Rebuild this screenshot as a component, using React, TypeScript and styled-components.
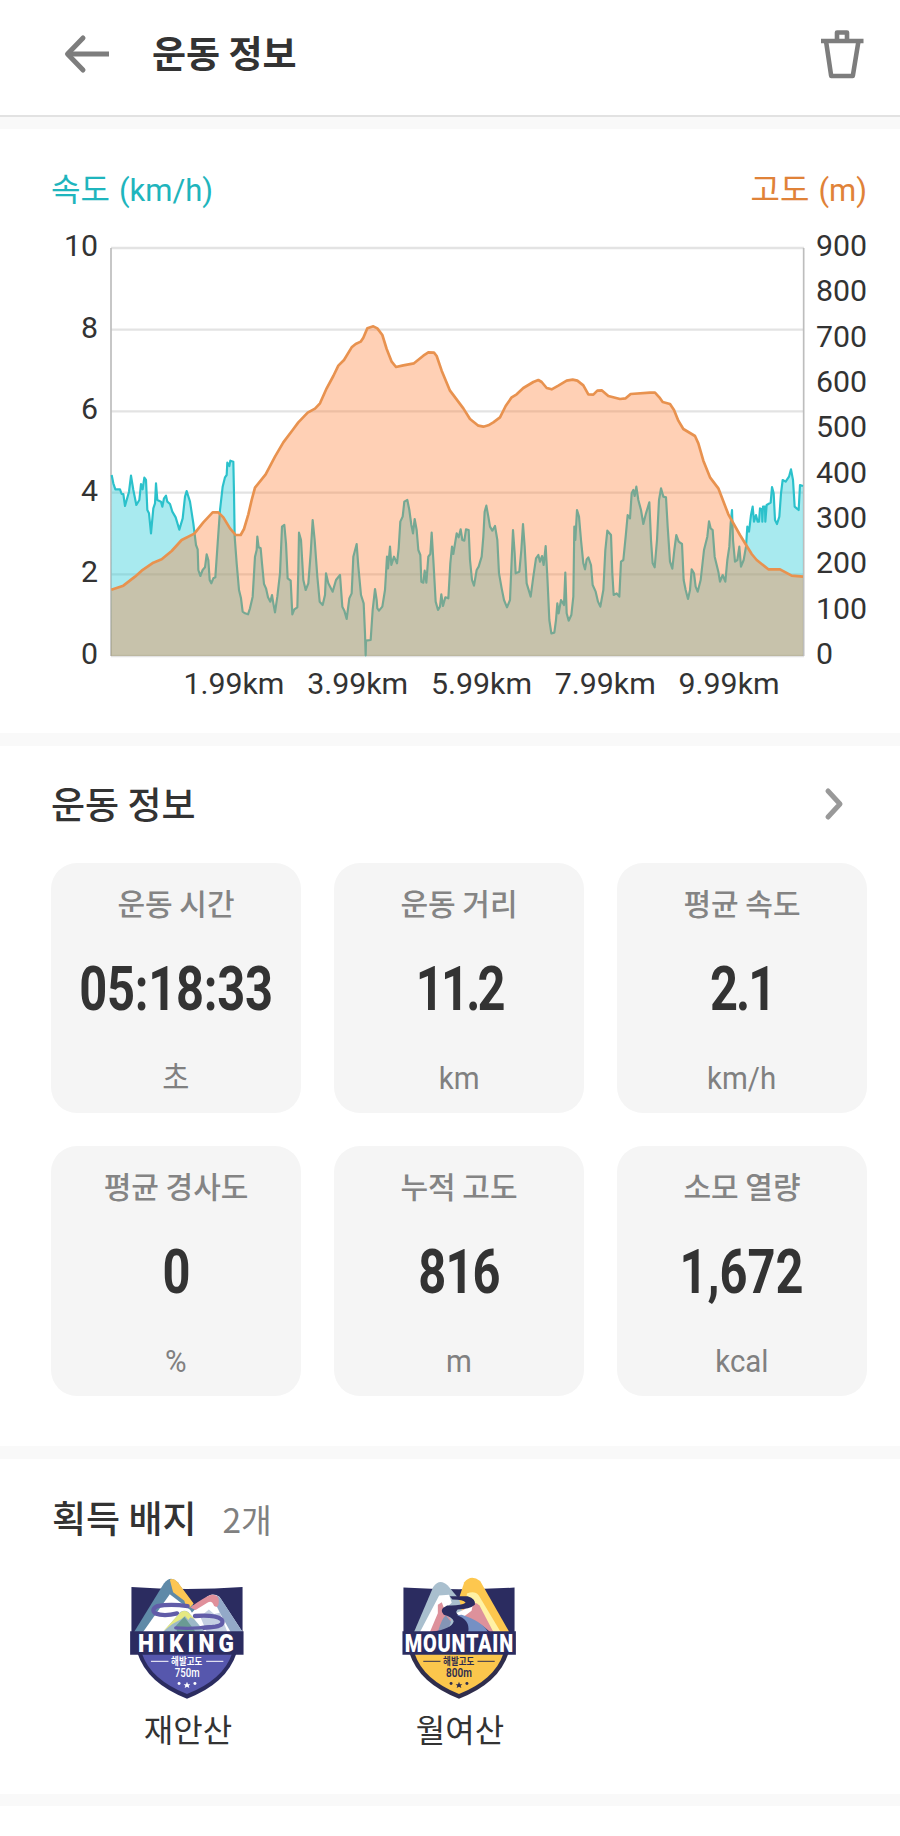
import React from 'react';
import styled, { createGlobalStyle } from 'styled-components';

const GlobalStyle = createGlobalStyle`
  * {
    box-sizing: border-box;
  }
  body {
    margin: 0;
    background-color: #ffffff;
    font-family: 'Noto Sans CJK KR', sans-serif;
    color: #333333;
  }
`;

const Page = styled.div`
  width: 900px;
  height: 1836px;
  overflow: hidden;
  display: flex;
  flex-direction: column;
`;

const Header = styled.header`
  height: 117px;
  flex-shrink: 0;
  display: flex;
  align-items: center;
  padding: 0 36px 8px 64px;
  border-bottom: 2px solid #e2e2e2;
`;

const HeaderTitle = styled.h1`
  margin: -3px auto 0 42px;
  font-size: 37px;
  font-weight: 700;
  line-height: 48px;
`;

const Divider = styled.div<{ $height?: number }>`
  height: ${(props) => props.$height || 13}px;
  flex-shrink: 0;
  background-color: #f9f9f9;
`;

const ChartSection = styled.section`
  height: 604px;
  flex-shrink: 0;
  padding: 38px 33px 0 51px;
`;

const Legend = styled.div`
  display: flex;
  justify-content: space-between;
  height: 42px;
  margin-bottom: 39px;
`;

const LegendLabel = styled.span<{ $color: string }>`
  color: ${(props) => props.$color};
  font-size: 32px;
  line-height: 40px;
`;

const LegendUnit = styled.span`
  margin-left: 9px;
  font-family: Roboto, sans-serif;
  font-size: 31px;
`;

const ChartRow = styled.div`
  display: flex;
  height: 408px;
`;

const Axis = styled.div<{ $side: 'left' | 'right' }>`
  width: ${(props) => (props.$side === 'left' ? '60px' : '63px')};
  height: 438px;
  margin-top: -17px;
  padding: ${(props) => (props.$side === 'left' ? '0 13px 0 0' : '0 0 0 12px')};
  display: flex;
  flex-direction: column;
  justify-content: space-between;
  text-align: ${(props) => (props.$side === 'left' ? 'right' : 'left')};
  font-family: Roboto, sans-serif;
  font-size: 30.3px;
  line-height: 30px;
`;

const Plot = styled.svg`
  width: 693px;
  height: 408px;
  flex-shrink: 0;
  overflow: visible;
`;

const DistanceAxis = styled.div`
  display: grid;
  grid-template-columns: repeat(5, 123.8px);
  margin: 13px 0 0 121px;
  text-align: center;
  font-family: Roboto, sans-serif;
  font-size: 30.3px;
  line-height: 30px;
`;

const InfoSection = styled.section`
  height: 700px;
  flex-shrink: 0;
  padding: 34px 33px 0 51px;
`;

const SectionHead = styled.div`
  display: flex;
  align-items: center;
  justify-content: space-between;
  height: 48px;
  padding-right: 23px;
`;

const SectionTitle = styled.h2`
  margin: -2px 0 0;
  font-size: 37px;
  font-weight: 500;
  line-height: 48px;
`;

const CardGrid = styled.div`
  display: grid;
  grid-template-columns: repeat(3, 250px);
  grid-auto-rows: 250px;
  gap: 33px;
  margin-top: 35px;
`;

const Card = styled.div`
  display: flex;
  flex-direction: column;
  align-items: center;
  padding-top: 19px;
  border-radius: 26px;
  background-color: #f5f5f5;
`;

const CardLabel = styled.span`
  font-size: 30px;
  font-weight: 500;
  line-height: 40px;
  color: #848484;
`;

const CardUnit = styled.span`
  font-family: Roboto, 'Noto Sans CJK KR', sans-serif;
  font-size: 32px;
  font-weight: 400;
  line-height: 40px;
  color: #808080;
  transform: scaleX(0.92);
`;

const CardValue = styled.strong<{ $spacing: number }>`
  margin: 37px 0 39px;
  font-family: Roboto, sans-serif;
  font-size: 61px;
  font-weight: 700;
  line-height: 60px;
  letter-spacing: ${(props) => props.$spacing}px;
  transform: scaleX(0.8);
`;

const BadgeSection = styled.section`
  height: 335px;
  flex-shrink: 0;
  padding: 36px 51px 0 52px;
`;

const BadgeCount = styled.span`
  margin-left: 26px;
  font-size: 33.5px;
  font-weight: 400;
  color: #808080;
`;

const BadgeList = styled.div`
  display: grid;
  grid-template-columns: repeat(3, 272px);
  margin: 34px 0 0 -1px;
`;

const Badge = styled.div`
  display: flex;
  flex-direction: column;
  align-items: center;
  svg {
    width: 120px;
    height: 124px;
    overflow: visible;
  }
`;

const BadgeName = styled.span`
  margin: 6px 0 0 2px;
  font-size: 32px;
  line-height: 42px;
`;

const SPEED =
  '2,681 7,706 13,724 27,724 32,738 37,738 42,774 54,731 60,683 67,726 76,771 85,756 90,708 95,724 100,689 105,696 109,786 114,796 120,856 127,781 132,766 135,706 139,756 150,761 154,776 159,751 165,743 169,761 177,768 184,791 194,808 205,845 215,811 222,746 227,729 237,761 247,826 255,891 260,904 262,966 268,984 275,966 282,958 287,919 292,936 296,996 301,1006 307,991 313,988 320,886 327,786 335,716 342,688 347,681 349,644 355,654 358,638 367,641 369,736 371,866 377,946 384,1026 390,1051 395,1091 402,1096 411,1099 417,1081 425,1046 432,926 437,906 439,866 443,898 449,901 453,946 459,1008 465,1021 471,1048 478,1061 483,1041 487,1066 492,1093 499,1046 507,976 513,836 520,831 525,886 530,991 539,998 544,1099 550,1084 559,1078 562,966 564,854 570,876 577,996 584,1026 592,1006 599,916 605,816 611,876 619,986 626,1061 635,1071 642,1041 645,976 652,1006 665,1031 675,996 687,981 694,1076 700,1088 707,1113 715,1051 722,1036 727,926 737,888 742,956 750,1041 758,1066 762,1156 764,1222 765,1178 779,1176 785,1086 792,1023 797,1056 799,1081 804,1088 814,1076 822,1026 828,926 831,961 837,896 841,951 849,926 858,946 863,901 868,821 875,806 880,761 889,756 895,786 901,831 906,856 911,813 917,846 922,906 928,921 931,1001 937,1004 941,968 946,1004 952,926 958,918 962,854 967,936 974,1061 981,1086 987,1076 991,1039 996,1074 1003,1048 1012,1051 1018,946 1023,896 1027,918 1037,856 1043,868 1049,844 1054,876 1060,878 1065,844 1073,846 1077,936 1083,996 1089,1013 1097,966 1103,956 1112,926 1117,866 1121,791 1126,773 1132,806 1137,836 1144,848 1152,834 1159,876 1164,976 1172,1021 1179,1056 1188,1078 1197,1056 1202,936 1206,846 1211,916 1214,976 1225,971 1231,906 1236,828 1241,896 1247,1006 1259,1046 1267,986 1275,931 1282,921 1287,941 1293,924 1298,951 1304,894 1309,986 1315,1116 1321,1156 1330,1154 1335,1116 1339,1066 1343,1096 1350,1056 1359,1071 1363,974 1367,1096 1373,1118 1381,1101 1387,1046 1390,836 1393,876 1398,786 1404,806 1410,876 1417,946 1422,964 1427,934 1432,928 1440,951 1445,1011 1454,1031 1461,1061 1468,1076 1477,1026 1483,906 1489,848 1500,861 1504,976 1508,1041 1517,1036 1525,1046 1530,941 1537,936 1544,866 1550,801 1557,811 1562,736 1567,726 1571,744 1576,716 1582,756 1590,786 1597,828 1605,796 1615,763 1620,876 1625,946 1631,958 1638,876 1644,756 1650,721 1657,746 1665,748 1670,836 1677,941 1684,962 1690,906 1696,861 1703,881 1713,888 1718,996 1724,1026 1731,1053 1737,1026 1742,964 1749,976 1754,1016 1760,1031 1769,996 1779,906 1789,866 1794,820 1799,841 1805,846 1811,926 1822,971 1827,1001 1835,981 1843,1001 1849,936 1855,896 1859,826 1863,786 1866,876 1872,941 1879,936 1885,896 1890,956 1898,936 1905,896 1909,836 1914,851 1920,801 1925,776 1929,821 1935,801 1940,821 1944,821 1947,781 1953,785 1954,821 1956,776 1962,776 1963,821 1967,771 1979,764 1983,717 1988,736 1992,816 1998,828 2005,806 2010,736 2015,696 2024,701 2034,686 2040,664 2046,696 2051,776 2057,781 2063,786 2067,711 2076,714';

const ALTITUDE =
  '1,1025 37,1013 72,986 92,968 127,944 152,934 182,909 212,876 250,857 277,823 305,793 322,793 337,808 357,841 374,861 389,861 399,843 412,799 422,756 432,719 464,679 492,626 517,583 545,546 562,523 590,494 612,482 627,466 647,421 667,384 682,353 699,336 722,298 734,288 749,281 757,269 769,241 787,235 799,241 814,261 827,303 842,341 855,357 877,352 909,346 937,323 952,313 969,314 977,324 992,368 1017,428 1057,481 1077,513 1102,533 1117,536 1132,532 1147,523 1167,508 1184,474 1202,448 1217,439 1237,420 1267,402 1282,396 1292,402 1307,420 1322,424 1342,413 1367,398 1385,395 1399,398 1417,412 1432,439 1447,440 1459,428 1472,427 1492,444 1527,453 1544,451 1559,438 1617,434 1632,434 1645,448 1655,462 1677,468 1689,486 1702,518 1717,543 1752,564 1762,586 1777,638 1797,688 1822,721 1852,799 1887,861 1922,918 1937,936 1972,964 2007,964 2042,983 2076,986';

const speedTicks = [10, 8, 6, 4, 2, 0];
const altitudeTicks = [900, 800, 700, 600, 500, 400, 300, 200, 100, 0];
const distanceTicks = ['1.99km', '3.99km', '5.99km', '7.99km', '9.99km'];

const stats = [
  { label: '운동 시간', value: '05:18:33', unit: '초', spacing: -0.3 },
  { label: '운동 거리', value: '11.2', unit: 'km', spacing: -3.5 },
  { label: '평균 속도', value: '2.1', unit: 'km/h', spacing: -2.5 },
  { label: '평균 경사도', value: '0', unit: '%', spacing: 0 },
  { label: '누적 고도', value: '816', unit: 'm', spacing: -1 },
  { label: '소모 열량', value: '1,672', unit: 'kcal', spacing: 0 },
];

const BackIcon = () => (
  <svg width="46" height="40" viewBox="0 0 46 40" fill="none" stroke="#7d7d7d" strokeWidth="5">
    <path d="M19 4 3.500 20 19 36" strokeLinecap="round" strokeLinejoin="round" />
    <path d="M4 20H45" />
  </svg>
);

const TrashIcon = () => (
  <svg width="44" height="50" viewBox="0 0 44 50" fill="none" stroke="#7d7d7d" strokeWidth="4.6" strokeLinejoin="round">
    <path d="M1 12H43.500" />
    <path d="M17 11V3.500H27V11" />
    <path d="M6 12 11.200 47H32.800L38.500 12" />
  </svg>
);

const ChevronIcon = () => (
  <svg width="20" height="34" viewBox="0 0 20 34" fill="none" stroke="#999999" strokeWidth="5" strokeLinecap="round" strokeLinejoin="round">
    <path d="M4 4 16 17 4 30" />
  </svg>
);

const Chart = () => (
  <Plot viewBox="0 0 2079 1224">
    {[0, 245, 490, 734, 979, 1224].map((y) => (
      <path key={y} d={`M0 ${y}H2079`} stroke="#e3e3e3" strokeWidth="7" />
    ))}
    <path d="M0 0V1224M2078 0V1224" stroke="#bdbdbd" strokeWidth="5" />
    <polygon points={`0,1224 ${SPEED} 2076,1224`} fill="#25cbd7" fillOpacity="0.4" />
    <polyline points={SPEED} fill="none" stroke="#2bc1cb" strokeWidth="6.500" strokeLinejoin="round" />
    <polygon points={`0,1224 ${ALTITUDE} 2076,1224`} fill="#ff7b2f" fillOpacity="0.356" />
    <polyline points={ALTITUDE} fill="none" stroke="#e8924f" strokeWidth="8" strokeLinejoin="round" />
  </Plot>
);

const HikingBadge = () => (
  <svg viewBox="50 20 360 375">
    <path d="M62 50Q230 62 398 50V190H62Z" fill="#2b2c60" />
    <path d="M70 186 160 40Q180 12 202 36L245 98 300 186Z" fill="#5f8aa8" />
    <path d="M97 186 178 72 240 120 280 186Z" fill="#ffffff" />
    <path d="M178 28Q190 22 202 36L250 100 238 112 226 106 222 92 206 80 188 66Z" fill="#fdc653" />
    <path d="M190 186 286 84Q305 64 328 80L398 186Z" fill="#ffffff" />
    <path d="M316 76Q326 76 334 88L398 186H362L330 130 316 100Z" fill="#93a9c8" />
    <path d="M240 112Q290 76 306 74 330 74 326 98 324 116 312 108 306 90 294 96L256 120Z" fill="#e0909b" />
    <path d="M270 140 296 118 312 132 330 128 352 186H290Z" fill="#c4cfe2" />
    <path d="M232 108Q180 100 140 108 120 118 134 130 160 140 200 130M254 138Q316 134 334 148 346 164 316 170 266 178 196 174" fill="none" stroke="#615ca8" strokeWidth="13" strokeLinecap="round" />
    <path d="M158 186 210 126Q222 118 234 126L284 186Z" fill="#9cb8c8" />
    <path d="M196 168 222 140 256 186H200Z" fill="#6a9b94" />
    <path d="M158 184 210 127Q222 118 234 127L254 148 240 142 234 150 224 138 212 148 186 162Z" fill="#e5e982" />
    <path d="M196 174Q250 178 300 170" fill="none" stroke="#615ca8" strokeWidth="10" strokeLinecap="round" />
    <path d="M80 250H380Q350 342 230 388 110 342 80 250Z" fill="#2b2c60" />
    <path d="M94 252H366Q340 330 230 374 120 330 94 252Z" fill="#5657ad" />
    <path d="M58 184H401V255H58Z" fill="#2b2c60" />
    <text x="82" y="246" textLength="302" lengthAdjust="spacingAndGlyphs" letterSpacing="14" fontFamily="Roboto, sans-serif" fontSize="77" fontWeight="900" fill="#ffffff">HIKING</text>
    <path d="M121 275H174M288 275H340" stroke="#ffffff" strokeWidth="3" />
    <text x="182" y="287" textLength="94" lengthAdjust="spacingAndGlyphs" fontFamily="Noto Sans CJK KR, sans-serif" fontSize="30" fontWeight="700" fill="#ffffff">해발고도</text>
    <text x="193" y="322" textLength="75" lengthAdjust="spacingAndGlyphs" fontFamily="Roboto, sans-serif" fontSize="37" fontWeight="500" fill="#ffffff">750m</text>
    <path d="M230 337 233 344 240 344 235 349 237 356 230 352 223 356 225 349 220 344 227 344Z" fill="#ffffff" />
    <circle cx="206" cy="342" r="4.500" fill="#ffffff" />
    <circle cx="254" cy="342" r="4.500" fill="#ffffff" />
  </svg>
);

const MountainBadge = () => (
  <svg viewBox="56 20 360 375">
    <path d="M68 52Q236 62 404 52V190H68Z" fill="#2b2c60" />
    <path d="M100 186 158 50Q178 22 202 46L256 110 250 186Z" fill="#a9bfce" />
    <path d="M118 186 176 76 206 74 214 98 190 120 206 150 160 186Z" fill="#ffffff" />
    <path d="M148 186 172 130 172 104 184 96 196 130 212 150 182 186Z" fill="#dd919b" />
    <path d="M172 186Q184 146 196 136L212 156 200 186Z" fill="#8495b5" />
    <path d="M236 84 252 36Q272 10 300 32L388 186H260Z" fill="#fdc74e" />
    <path d="M260 70Q284 60 296 76L362 186H300L252 130Z" fill="#fff1a5" />
    <path d="M234 136Q276 80 298 106L340 186H290Z" fill="#dd919b" />
    <path d="M222 132 252 118 280 94 274 122 250 140Z" fill="#ffffff" />
    <path d="M208 78H262Q288 86 284 104 268 118 232 118 220 128 240 138 300 156 330 186H152Q214 178 220 154 216 140 190 134 174 118 200 106 240 108 256 98 250 88 216 88Z" fill="#2b2c60" />
    <path d="M244 134Q306 154 324 186H264Q270 150 230 136Z" fill="#7590c4" />
    <path d="M86 250H386Q356 342 236 388 116 342 86 250Z" fill="#2f2d4c" />
    <path d="M102 252H370Q344 330 236 374 128 330 102 252Z" fill="#fbc64c" />
    <path d="M65 184H408V255H65Z" fill="#2b2c60" />
    <text x="72" y="246" textLength="330" lengthAdjust="spacingAndGlyphs" letterSpacing="3" fontFamily="Roboto, sans-serif" fontSize="77" fontWeight="900" fill="#ffffff">MOUNTAIN</text>
    <path d="M128 275H180M292 275H344" stroke="#2f2d4c" strokeWidth="3" />
    <text x="188" y="287" textLength="94" lengthAdjust="spacingAndGlyphs" fontFamily="Noto Sans CJK KR, sans-serif" fontSize="30" fontWeight="700" fill="#2f2d4c">해발고도</text>
    <text x="197" y="322" textLength="78" lengthAdjust="spacingAndGlyphs" fontFamily="Roboto, sans-serif" fontSize="37" fontWeight="600" fill="#2f2d4c">800m</text>
    <path d="M236 337 239 344 246 344 241 349 243 356 236 352 229 356 231 349 226 344 233 344Z" fill="#2f2d4c" />
    <circle cx="212" cy="342" r="4.500" fill="#2f2d4c" />
    <circle cx="260" cy="342" r="4.500" fill="#2f2d4c" />
  </svg>
);

const App = () => {
  return (
    <Page>
      <GlobalStyle />
      <Header>
        <BackIcon />
        <HeaderTitle>운동 정보</HeaderTitle>
        <TrashIcon />
      </Header>
      <Divider $height={12} />
      <ChartSection>
        <Legend>
          <LegendLabel $color="#1fb5bd">
            속도<LegendUnit>(km/h)</LegendUnit>
          </LegendLabel>
          <LegendLabel $color="#e08238">
            고도<LegendUnit>(m)</LegendUnit>
          </LegendLabel>
        </Legend>
        <ChartRow>
          <Axis $side="left">
            {speedTicks.map((tick) => (
              <span key={tick}>{tick}</span>
            ))}
          </Axis>
          <Chart />
          <Axis $side="right">
            {altitudeTicks.map((tick) => (
              <span key={tick}>{tick}</span>
            ))}
          </Axis>
        </ChartRow>
        <DistanceAxis>
          {distanceTicks.map((tick) => (
            <span key={tick}>{tick}</span>
          ))}
        </DistanceAxis>
      </ChartSection>
      <Divider />
      <InfoSection>
        <SectionHead>
          <SectionTitle>운동 정보</SectionTitle>
          <ChevronIcon />
        </SectionHead>
        <CardGrid>
          {stats.map((stat) => (
            <Card key={stat.label}>
              <CardLabel>{stat.label}</CardLabel>
              <CardValue $spacing={stat.spacing}>{stat.value}</CardValue>
              <CardUnit>{stat.unit}</CardUnit>
            </Card>
          ))}
        </CardGrid>
      </InfoSection>
      <Divider />
      <BadgeSection>
        <SectionTitle>
          획득 배지
          <BadgeCount>2개</BadgeCount>
        </SectionTitle>
        <BadgeList>
          <Badge>
            <HikingBadge />
            <BadgeName>재안산</BadgeName>
          </Badge>
          <Badge>
            <MountainBadge />
            <BadgeName>월여산</BadgeName>
          </Badge>
        </BadgeList>
      </BadgeSection>
      <Divider $height={12} />
    </Page>
  );
};

export default App;
